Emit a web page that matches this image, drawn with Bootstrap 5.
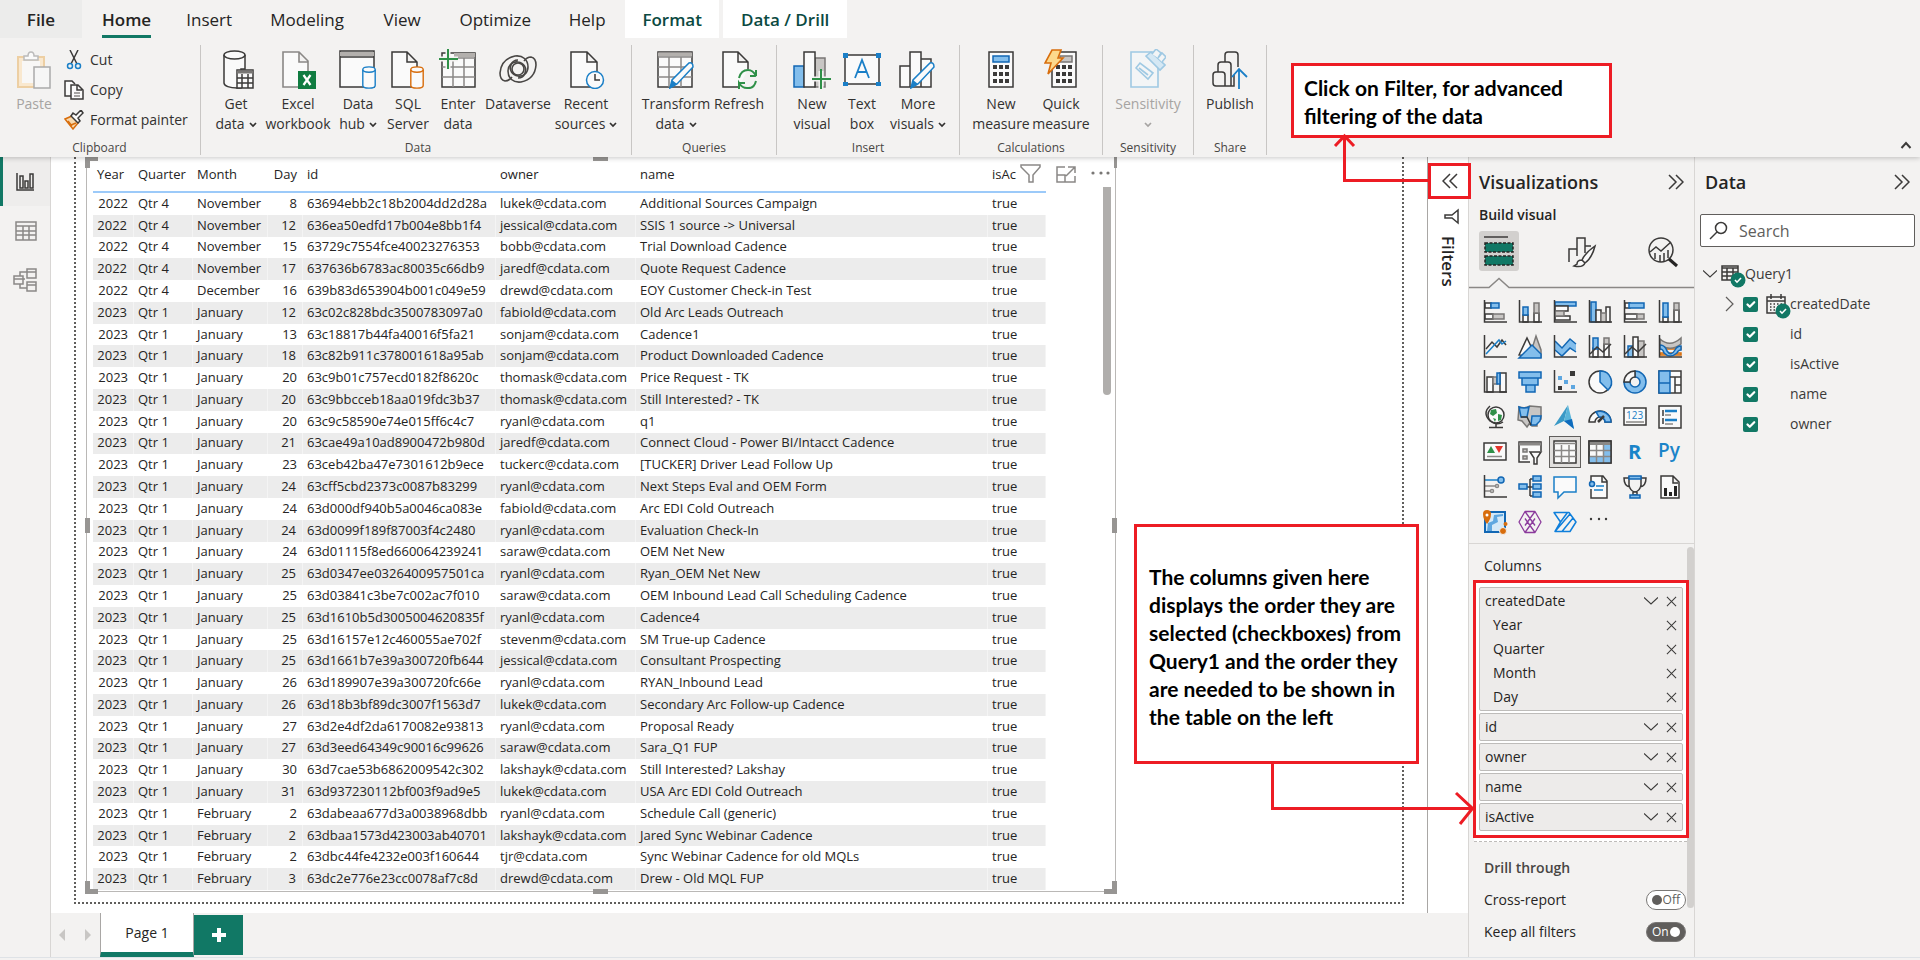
<!DOCTYPE html>
<html lang="en">
<head>
<meta charset="utf-8">
<meta name="viewport" content="width=device-width, initial-scale=1">
<title>Power BI report</title>
<link href="https://cdn.jsdelivr.net/npm/bootstrap@5.3.0/dist/css/bootstrap.min.css" rel="stylesheet">
<style>
:root{--ink:#252423;--chrome:#f3f2f1;--line:#c8c6c4;--teal:#117865;--red:#ed1c24}
body{font-family:"Open Sans","Noto Sans",sans-serif;font-size:14px;line-height:20px;color:var(--ink);background:var(--chrome);overflow:hidden}
button{font:inherit;color:inherit;background:none;border:0;padding:0}
svg{display:block;fill:none;flex-shrink:0}
.semi{font-weight:600}
/* svg paint */
.k{stroke:#3b3a39;stroke-width:1.5}.kf{stroke:#3b3a39;stroke-width:1.5;fill:#fafafa}
.g{stroke:#8a8886;stroke-width:1.5}.gf{stroke:#797775;stroke-width:1.5;fill:#c8c6c4}
.b{stroke:#1a7fc7;stroke-width:1.5}.bf{stroke:#1267b4;stroke-width:1.5;fill:#83beec}.bw{stroke:#1a7fc7;stroke-width:1.5;fill:#fafafa}
.n{stroke:#2f9048;stroke-width:2}
/* ribbon */
.ribbon{box-shadow:0 1px 5px rgba(0,0,0,.22);z-index:3;background:var(--chrome)}
.tabs{height:38px;font-size:17px}
.tabs button{height:38px;padding-top:2px;text-align:center}
.tabs .file{width:82px;background:#ececeb;font-weight:600}
.tabs .on{padding-top:0}
.tabs .on span{font-weight:600;display:block;line-height:30px;border-bottom:3px solid var(--teal);padding-top:5px}
.tabs .ctx{background:#fff;color:#0b4a42;font-weight:600}
.groups{height:119px;padding-top:7px}
.grp{height:110px;border-right:1px solid var(--line);padding:0 9px}
.grp .cap{font-size:12px;line-height:16px;text-align:center;color:#484644}
.grp .tools{height:95px;color:#323130}
.tool{display:flex;flex-direction:column;align-items:center;height:92px;white-space:nowrap}
.tool svg.ic{margin:4px 0 5px}
.w44{width:44px}.w48{width:48px}.w52{width:52px}.w56{width:56px}.w60{width:60px}.w64{width:64px}.w72{width:72px}
.small-tool{height:30px;gap:6px}
.off{color:#a6a4a2}
/* side rail */
.rail{width:51px;border-right:1px solid #d8d6d4}
.rail button{height:49px;border-left:3px solid transparent;padding-left:10px}
.rail .on{border-color:var(--teal);background:#eeedec}
/* canvas */
.canvas{background:#fff;padding:0 23px 9px 23px}
.sheet{border:2px dotted #605e5c;border-top:0;padding:0 0 10px 10px}
.visual{width:1030px;border:1px solid #bab8b6;border-top:0;padding:0 0 1px 6px}
.visual .hd{position:absolute;background:#979593}
.grid-data{table-layout:fixed;width:953px;height:100%;font-size:13px;line-height:17px;border-collapse:separate;border-spacing:0}
.grid-data th{font-weight:400;height:36px;padding:0 6px 0 4px;border-bottom:2px solid #9ccaf9;vertical-align:top;padding-top:9px;overflow:hidden}
.grid-data td{padding:0 6px 1px 4px;white-space:nowrap}
.grid-data tbody tr:nth-child(even) td{background:#ececec;border-right:1px solid #f4f4f4}
.grid-data td:nth-child(4),.grid-data th:nth-child(4),.grid-data td:first-child{text-align:right}
.vis-tools{right:3px;top:7px;gap:14px}
.vbar{right:4px;top:30px;width:8px;height:208px;background:#b0aeac;border-radius:0 0 4px 4px}
.filters{width:41px;background:#fff;border-left:1px solid #a9a7a5;padding-top:6px}
.filters .hot{position:relative;z-index:1;width:43px;height:36px;border:3px solid var(--red);display:flex;align-items:center;justify-content:center;align-self:flex-start}
.filters .vert{writing-mode:vertical-rl;font-size:17px;font-weight:600;line-height:20px;margin-top:11px}
.pages{height:44px;background:var(--chrome)}
.pages .tab{width:94px;background:#fff;border:solid #a9a7a5;border-width:0 1px;border-bottom:5px solid var(--teal)}
.pages .add{width:49px;height:40px;background:var(--teal);margin-top:2px}
/* right panes */
.pane{width:226px;border-left:1px solid #d8d6d4;background:var(--chrome)}
.pane h2{font-size:18px;line-height:26px;font-weight:600;margin:0}
.build-title{padding:10px 0 2px 10px}
.build{height:41px;padding-left:10px;gap:49px;margin-top:4px}
.build .pick{width:40px;height:40px;background:#d2d0ce;border-radius:3px;display:flex;align-items:center;justify-content:center}
.gallery{display:grid;grid-template-columns:repeat(6,35px);grid-auto-rows:35px;padding:0 8px}
.gallery svg{overflow:visible}
.gallery button{display:flex;align-items:center;justify-content:center}
.gallery .sel svg{background:#e1dfdd;outline:1px solid #605e5c;outline-offset:3px;box-shadow:0 0 0 3px #e1dfdd}
.wells{position:relative;z-index:1;border:3px solid var(--red);background:#fff;margin:0 4px;padding:4px 3px;gap:2px;width:216px}
.well{background:#edebea;border:1px solid #bebcba;border-radius:2px;padding:1px 5px}
.well .ln{height:24px;gap:8px}
.drop{height:4px;background:#fff;border-bottom:1px dashed #bebcba;width:213px;margin-left:5px}
.sw{width:40px;height:20px;border-radius:10px;border:1px solid #797775;background:#fff;font-size:12px;line-height:18px;color:#605e5c;display:flex;align-items:center;justify-content:space-between;padding:0 5px}
.sw i{width:10px;height:10px;border-radius:50%;background:#605e5c}
.sw.yes{background:#605e5c;color:#fff}.sw.yes i{background:#fff}
.pbar{right:0;top:3px;width:7px;height:361px;background:#d2d0ce;border-radius:4px}
.search{height:33px;border:1px solid #605e5c;border-radius:2px;background:#fff;margin:19px 5px 8px}
.search input{border:0;outline:0;width:150px;font-size:16px;background:none}
.search input::placeholder{color:#605e5c;opacity:1}
.node{height:30px;color:#3b3a39}
.node .form-check-input{width:15px;height:15px;margin:0;border-radius:2px;border:0;background-color:var(--teal)}
.badge-ok{position:absolute}
/* annotations */
.note{position:absolute;background:#fff;border:3px solid var(--red);font-family:Lato,"Open Sans",sans-serif;font-weight:700;font-size:21px;line-height:28px;color:#000;z-index:5;display:flex;align-items:center;white-space:nowrap}
.note.top{right:308px;top:63px;width:321px;height:75px;padding:2px 0 0 10px}
.note.mid{right:501px;top:524px;width:285px;height:240px;padding:6px 0 0 12px}
.arrow{position:absolute;z-index:6;stroke:var(--red);stroke-width:3;pointer-events:none}
</style>
</head>
<body class="vh-100 d-flex flex-column position-relative">
<svg width="0" height="0" class="position-absolute">
  <symbol id="x" viewBox="0 0 12 12"><path d="M1 1l10 10M11 1L1 11" stroke="#3b3a39" stroke-width="1.1"/></symbol>
  <symbol id="dn" viewBox="0 0 14 8"><path d="M0 .5l7 6.500 7-6.500" stroke="#3b3a39" stroke-width="1.100"/></symbol>
  <symbol id="v" viewBox="0 0 8 6"><path d="M1 1l3 3 3-3" stroke="currentColor" stroke-width="1.700"/></symbol>
  <symbol id="ok" viewBox="0 0 16 16"><circle cx="8" cy="8" r="7.500" fill="#117865"/><path d="M5 8l2 2.200L11 6" stroke="#fff" stroke-width="1.600"/></symbol>
  <symbol id="cyl" viewBox="0 0 16 26"><path d="M1 4v18c0 2 3 3 7 3s7-1 7-3V4" fill="#fafafa" stroke="currentColor" stroke-width="1.600"/><ellipse cx="8" cy="4" rx="7" ry="3" fill="#fafafa" stroke="currentColor" stroke-width="1.600"/></symbol>
</svg>

<header class="ribbon position-relative">
  <nav class="tabs d-flex" aria-label="Ribbon tabs">
    <button class="file">File</button>
    <button class="on ms-3 px-1"><span>Home</span></button>
    <button style="width:76px" class="ms-3">Insert</button>
    <button style="width:112px" class="ms-1">Modeling</button>
    <button style="width:78px">View</button>
    <button style="width:108px">Optimize</button>
    <button style="width:76px">Help</button>
    <button class="ctx" style="width:94px">Format</button>
    <button class="ctx ms-1" style="width:124px">Data / Drill</button>
  </nav>
  <div class="groups d-flex">
    <section class="grp" style="width:201px;padding-left:12px">
      <div class="tools d-flex">
        <button class="tool off w44 me-2"><svg class="ic" width="36" height="40" viewBox="0 0 36 40"><path d="M2 8h26v30H2z" fill="#f9e8cf" stroke="#edcfa3" stroke-width="2"/><path d="M6 12h18v22H6z" fill="#f8f7f6"/><path d="M8 11V7h4q0-4 3-4t3 4h4v4z" fill="#fafafa" stroke="#bbb" stroke-width="1.500"/><path d="M18 18h16v21H18z" fill="#f6f6f6" stroke="#aaa" stroke-width="1.500"/></svg>Paste</button>
        <div>
          <button class="small-tool d-flex align-items-center"><svg width="20" height="20" viewBox="0 0 20 20"><path d="M6 0l7 14M14 0L7 14" class="k"/><circle cx="6" cy="16" r="2.500" class="b"/><circle cx="14" cy="16" r="2.500" class="b"/></svg>Cut</button>
          <button class="small-tool d-flex align-items-center"><svg width="20" height="20" viewBox="0 0 20 20"><path d="M7 16H1V1h7l3 3" class="kf"/><path d="M7 5h7l5 5v9H7zM13 5v5h5" class="kf"/><path d="M10 13h6M10 16h6" class="g"/></svg>Copy</button>
          <button class="small-tool d-flex align-items-center"><svg width="20" height="20" viewBox="0 0 20 20"><path d="M1 9l7-3 6 7-5 6z" fill="#f7d9ae" stroke="#d86d0c" stroke-width="1.500"/><path d="M4 11l4 5M7 15l5-2" stroke="#d86d0c" stroke-width="1.500"/><path d="M7 6l2-3 3 2 5-5 2 3-5 5 2 3-2 2z" class="kf"/></svg>Format painter</button>
        </div>
      </div>
      <div class="cap pe-1">Clipboard</div>
    </section>
    <section class="grp" style="padding-left:5px">
      <div class="tools d-flex">
        <button class="tool w60"><svg class="ic" width="36" height="40" viewBox="0 0 36 40"><path d="M6 6v28c0 3 6 5 13 5h4V20h4V6" class="kf"/><ellipse cx="16.500" cy="6" rx="10.500" ry="4" class="kf"/><path d="M19 21h16v18H19z" class="kf"/><path d="M19 23h16" stroke="#797775" stroke-width="3"/><path d="M19 29h16M19 34h16M24 25v14M30 25v14" class="k"/></svg><span>Get</span><span>data<svg class="d-inline ms-1" width="8" height="6"><use href="#v"/></svg></span></button>
        <button class="tool w64"><svg class="ic" width="36" height="40" viewBox="0 0 36 40"><path d="M3 3h16l9 9v26H3zM19 3v10h9" fill="#fafafa" stroke="#8a8886" stroke-width="1.600"/><path d="M18 22h18v18H18z" fill="#107c41"/><path d="M23.500 26l7 10M30.500 26l-7 10" stroke="#fff" stroke-width="2.200"/></svg><span>Excel</span><span>workbook</span></button>
        <button class="tool w56"><svg class="ic" width="38" height="40" viewBox="0 0 38 40"><path d="M1 2h34v36H1z" class="kf"/><path d="M1 5h34" stroke="#b3b0ad" stroke-width="4"/><path d="M1 8h34" class="k"/><svg x="22" y="17" width="16" height="23" color="#1a7fc7"><use href="#cyl"/></svg></svg><span>Data</span><span>hub<svg class="d-inline ms-1" width="8" height="6"><use href="#v"/></svg></span></button>
        <button class="tool w44"><svg class="ic" width="36" height="40" viewBox="0 0 36 40"><path d="M2 3h15l10 10v25H2zM17 3v10h10" class="kf"/><svg x="19" y="17" width="16" height="23" color="#d86d0c"><use href="#cyl"/></svg></svg><span>SQL</span><span>Server</span></button>
        <button class="tool w56"><svg class="ic" width="40" height="40" viewBox="0 0 40 40"><path d="M4 4h33v34H4z" class="kf"/><path d="M16 6h21" stroke="#b3b0ad" stroke-width="4"/><path d="M4 9h33M4 18h33M4 28h33M15 9v29M26 9v29" class="g"/><path d="M10 0v20M1 10h19" stroke="#f3f2f1" stroke-width="5"/><path d="M10 0v20M1 10h19" class="n"/></svg><span>Enter</span><span>data</span></button>
        <button class="tool w64 px-0"><svg class="ic" width="38" height="40" viewBox="0 0 38 40"><g stroke="#484644" stroke-width="1.600"><circle cx="19" cy="20" r="6"/><path id="dv" d="M13 28q-3 4-7 4Q1 31 1 24 2 10 16 7c8-1 13 4 13 11 0 6-5 10-10 9-6-1-9-6-7-11 1-3 4-5 7-5"/><use href="#dv" transform="rotate(180 19 20)"/></g></svg>Dataverse</button>
        <button class="tool w72"><svg class="ic" width="38" height="40" viewBox="0 0 38 40"><path d="M4 3h16l10 10v25H4zM20 3v10h10" class="kf"/><circle cx="28" cy="31" r="8.500" class="bw"/><path d="M28 25v6h5" class="k"/></svg><span>Recent</span><span>sources<svg class="d-inline ms-1" width="8" height="6"><use href="#v"/></svg></span></button>
      </div>
      <div class="cap ps-2">Data</div>
    </section>
    <section class="grp">
      <div class="tools d-flex">
        <button class="tool" style="width:70px"><svg class="ic" width="38" height="40" viewBox="0 0 38 40"><path d="M1 3h34v35H1z" class="kf"/><path d="M1 5.500h34" stroke="#b3b0ad" stroke-width="4"/><path d="M1 8h34M1 18h34M1 28h34M12 8v30M24 8v30" class="g"/><path d="M13 39l2-8 17-17q4-1 4 4L20 35z" class="bw"/><path d="M13 39l2-8 5 4z" fill="#1a7fc7"/></svg><span>Transform</span><span>data<svg class="d-inline ms-1" width="8" height="6"><use href="#v"/></svg></span></button>
        <button class="tool w56"><svg class="ic" width="36" height="40" viewBox="0 0 36 40"><path d="M18 38H2V3h15l10 10v7M17 3v10h10" class="kf"/><path d="M18 29q2-8 9-8 5 0 8 6v-6M35 27h-6M35 32q-2 8-9 7-5 0-8-5v6M18 34h6" class="n"/></svg>Refresh</button>
      </div>
      <div class="cap">Queries</div>
    </section>
    <section class="grp">
      <div class="tools d-flex">
        <button class="tool w52"><svg class="ic" width="38" height="40" viewBox="0 0 38 40"><path d="M1 17h10v21H1z" class="bf"/><path d="M22 9h10v29H22z" class="gf"/><path d="M11 3h11v35H11z" class="kf"/><path d="M28 22v19M19 30h18" stroke="#f3f2f1" stroke-width="5"/><path d="M28 20v20M19 30h19" class="n"/></svg><span>New</span><span>visual</span></button>
        <button class="tool w48"><svg class="ic" width="40" height="40" viewBox="0 0 40 40"><path d="M3 6h34v29H3z" class="kf"/><path d="M1 4h5v5H1zM34 4h5v5h-5zM1 33h5v4H1zM34 33h5v4h-5z" fill="#1a7fc7"/><path d="M13 29l7-18 7 18M15.500 23h9" stroke="#1a7fc7" stroke-width="1.800"/></svg><span>Text</span><span>box</span></button>
        <button class="tool w64"><svg class="ic" width="38" height="40" viewBox="0 0 38 40"><path d="M1 17h10v21H1zM22 10h10v28H22zM11 3h11v35H11z" class="kf"/><path d="M12 39l2-8 17-17q4-1 4 4L19 35z" class="bw"/><path d="M12 39l2-8 5 4z" fill="#1a7fc7"/></svg><span>More</span><span>visuals<svg class="d-inline ms-1" width="8" height="6"><use href="#v"/></svg></span></button>
      </div>
      <div class="cap">Insert</div>
    </section>
    <section class="grp px-2" style="width:143px">
      <div class="tools d-flex justify-content-center">
        <button class="tool w60"><svg class="ic" width="26" height="40" viewBox="0 0 26 40"><path d="M1 3h24v35H1z" class="kf"/><path d="M5 7h16v6H5z" class="bf"/><path d="M5 18h16M5 25h16M5 32h16" stroke="#3b3a39" stroke-width="4" stroke-dasharray="4 2"/></svg><span>New</span><span>measure</span></button>
        <button class="tool w60"><svg class="ic" width="34" height="40" viewBox="0 0 34 40"><path d="M8 3h24v35H8z" class="kf"/><path d="M16 7h12v6H16z" class="gf"/><path d="M12 18h16M12 25h16M12 32h16" stroke="#3b3a39" stroke-width="4" stroke-dasharray="4 2"/><path d="M8 1h9l-3 8h5L4 25l3-11H1z" fill="#fcd98c" stroke="#d86d0c" stroke-width="1.600"/></svg><span>Quick</span><span>measure</span></button>
      </div>
      <div class="cap">Calculations</div>
    </section>
    <section class="grp">
      <div class="tools d-flex">
        <button class="tool w72 off"><svg class="ic" width="36" height="40" viewBox="0 0 36 40"><g stroke="#9fc9e3" stroke-width="1.600"><path d="M1 3h27v35H1z" fill="#f3f5f6"/><path d="M6 19l4-5 13 10-5 6z" fill="#f3f5f6"/><path d="M9 19l9 7"/><path d="M16 7l5-4 14 13-5 5z" fill="#d5e8f4"/><path d="M22 5l4-5 5 4-3 5M28 9l4-5 4 4-4 5" fill="#f3f5f6"/></g></svg><span>Sensitivity</span><svg class="mt-2" width="8" height="6"><use href="#v"/></svg></button>
      </div>
      <div class="cap">Sensitivity</div>
    </section>
    <section class="grp px-2">
      <div class="tools d-flex">
        <button class="tool w56"><svg class="ic" width="36" height="40" viewBox="0 0 36 40"><path d="M4 37q-3 0-3-3V26q0-3 3-3h6q3 0 3 3v11zM6 23v-7q0-3 3-3h7q3 0 3 3v21h-6M13 13V6q0-3 3-3h7q3 0 3 3v12M19 37h3V26" class="k"/><path d="M27 40V21M20 28l7-8 8 8" stroke="#1a7fc7" stroke-width="1.800"/></svg>Publish</button>
      </div>
      <div class="cap">Share</div>
    </section>
    <button class="ms-auto align-self-end me-1 pb-2 pe-1" aria-label="Collapse ribbon"><svg width="12" height="8" viewBox="0 0 12 8"><path d="M1.500 7L6 2l4.500 5" stroke="#3b3a39" stroke-width="2"/></svg></button>
  </div>
</header>

<main class="d-flex flex-grow-1 border-bottom" style="min-height:0;margin-bottom:2px">
  <nav class="rail d-flex flex-column flex-shrink-0" aria-label="Views">
    <button class="on" aria-label="Report view"><svg width="22" height="20" viewBox="0 0 22 20"><path d="M4 1v17h17" class="k"/><path d="M7 4h3v12H7zM12 9h3v7h-3zM17 2h3v14h-3z" class="k"/></svg></button>
    <button aria-label="Table view"><svg width="24" height="20" viewBox="0 0 24 20"><path d="M3 1h20v18H3zM3 5h20M3 10h20M3 14h20M10 5v14M16 5v14" class="g"/></svg></button>
    <button aria-label="Model view"><svg width="24" height="24" viewBox="0 0 24 24"><path d="M1 8h9v8H1zM1 11h9M14 1h9v9h-9zM14 4h9M14 14h9v9h-9zM14 17h9M10 11h2M7 8V4h7M7 16v4h7" class="g"/></svg></button>
  </nav>

  <div class="flex-grow-1 d-flex flex-column">
    <div class="flex-grow-1 d-flex">
      <div class="canvas flex-grow-1 d-flex flex-column">
        <div class="sheet flex-grow-1 d-flex">
          <div class="visual position-relative">
            <table class="grid-data">
              <colgroup><col style="width:41px"><col style="width:59px"><col style="width:75px"><col style="width:35px"><col style="width:193px"><col style="width:140px"><col style="width:352px"><col style="width:58px"></colgroup>
              <thead><tr><th>Year</th><th>Quarter</th><th>Month</th><th>Day</th><th>id</th><th>owner</th><th>name</th><th>isAc</th></tr></thead>
              <tbody id="rows"></tbody>
            </table>
            <div class="vis-tools position-absolute d-flex bg-white">
              <button aria-label="Filters"><svg width="22" height="20" viewBox="0 0 22 20"><path d="M1 1h19v2l-7 8v7H9v-7L1 3z" class="g"/></svg></button>
              <button aria-label="Focus mode"><svg width="20" height="20" viewBox="0 0 20 20"><path d="M9 3H1v15h18v-6M1 11h8v7M12 3h7v6M10 12l9-9" class="g"/></svg></button>
              <button aria-label="More options"><svg width="22" height="20" viewBox="0 0 22 20"><g fill="#797775"><circle cx="3" cy="9" r="1.600"/><circle cx="11" cy="9" r="1.600"/><circle cx="18" cy="9" r="1.600"/></g></svg></button>
            </div>
            <div class="vbar position-absolute"></div>
            <i class="hd" style="left:-2px;top:0;width:5px;height:11px"></i><i class="hd" style="left:-2px;top:0;width:13px;height:4px"></i>
            <i class="hd" style="left:506px;top:0;width:15px;height:4px"></i><i class="hd" style="right:-2px;top:0;width:3px;height:11px"></i>
            <i class="hd" style="left:-2px;top:361px;width:5px;height:15px"></i><i class="hd" style="right:-2px;top:361px;width:5px;height:15px"></i>
            <i class="hd" style="left:-2px;bottom:-3px;width:5px;height:13px"></i><i class="hd" style="left:-2px;bottom:-3px;width:13px;height:5px"></i>
            <i class="hd" style="left:506px;bottom:-3px;width:15px;height:5px"></i>
            <i class="hd" style="right:-2px;bottom:-3px;width:5px;height:13px"></i><i class="hd" style="right:-2px;bottom:-3px;width:13px;height:5px"></i>
          </div>
        </div>
      </div>
      <aside class="filters d-flex flex-column align-items-center">
        <button class="hot" aria-label="Expand filters"><svg width="16" height="16" viewBox="0 0 16 16"><path d="M8 1L1 8l7 7M15 1L8 8l7 7" class="k"/></svg></button>
        <svg class="mt-2 ms-2" width="16" height="18" viewBox="0 0 16 18"><path d="M14 3v13l-6-5H1V8h7z" class="k"/></svg>
        <span class="vert">Filters</span>
      </aside>
    </div>
    <div class="pages d-flex">
      <button class="px-2" aria-label="Previous page"><svg width="6" height="12"><path d="M6 0v12L0 6z" fill="#c8c6c4"/></svg></button>
      <button class="ms-1 pe-2 ps-2" aria-label="Next page"><svg width="7" height="12"><path d="M0 0v12l6-6z" fill="#c8c6c4"/></svg></button>
      <button class="tab">Page 1</button>
      <button class="add d-flex align-items-center justify-content-center" aria-label="New page"><svg width="14" height="14"><path d="M7 0v14M0 7h14" stroke="#fff" stroke-width="4"/></svg></button>
    </div>
  </div>

  <aside class="pane flex-shrink-0 d-flex flex-column">
    <div class="d-flex justify-content-between align-items-center mt-2 pt-1" style="padding:0 10px"><h2>Visualizations</h2><button aria-label="Collapse"><svg width="16" height="16" viewBox="0 0 16 16"><path d="M1 1l7 7-7 7M8 1l7 7-7 7" class="k"/></svg></button></div>
    <div class="semi build-title">Build visual</div>
    <div class="build d-flex">
      <button class="pick" aria-label="Build visual"><svg width="32" height="32" viewBox="0 0 32 32"><path d="M1 2h24" class="k"/><path d="M2 8h28v9H2zM2 21h28v9H2z" fill="#117865" stroke="#252423" stroke-width="1.500" stroke-dasharray="3 1.500"/></svg></button>
      <button aria-label="Format visual"><svg width="30" height="32" viewBox="0 0 30 32"><path d="M1 26V13h8M9 20V2h8v15M17 10h6" class="k"/><path d="M27 10Q17 17 14 24l3 3Q24 22 27 10zM14 24q-5 0-5 4l-3 2q9 2 11-3" class="kf"/></svg></button>
      <button aria-label="Analytics"><svg width="32" height="32" viewBox="0 0 32 32"><circle cx="14" cy="14" r="12" class="k"/><path d="M3 16l6-5 5 4 10-9M8 17v6M13 19v7M17 17v8M21 14v8" class="k"/><path d="M22 23l8 7" stroke="#252423" stroke-width="3"/></svg></button>
    </div>
    <svg width="100%" height="18" class="mt-1"><path d="M0 11.500h20l10-9 10 9h190" stroke="#8a8886" stroke-width="1.500"/></svg>
    <div class="gallery" id="gallery"></div>
    <div class="position-relative border-top mt-1 flex-grow-1" style="border-color:#d8d6d4!important">
      <div class="pt-2 pb-1 mt-1" style="padding-left:15px">Columns</div>
      <div class="wells d-flex flex-column" id="wells"></div>
      <div class="drop"></div>
      <div class="semi mt-3" style="color:#484644;padding-left:15px">Drill through</div>
      <div class="d-flex justify-content-between align-items-center pe-2 mt-2 pt-1" style="padding-left:15px"><label for="cr">Cross-report</label><label class="sw" for="cr"><input id="cr" type="checkbox" role="switch" class="visually-hidden"><i></i>Off</label></div>
      <div class="d-flex justify-content-between align-items-center pe-2 mt-2 pt-1" style="padding-left:15px"><label for="kf">Keep all filters</label><label class="sw yes" for="kf"><input id="kf" type="checkbox" role="switch" checked class="visually-hidden">On<i></i></label></div>
      <div class="pbar position-absolute"></div>
    </div>
  </aside>

  <aside class="pane flex-shrink-0">
    <div class="d-flex justify-content-between align-items-center mt-2 pt-1" style="padding:0 10px"><h2>Data</h2><button aria-label="Collapse"><svg width="16" height="16" viewBox="0 0 16 16"><path d="M1 1l7 7-7 7M8 1l7 7-7 7" class="k"/></svg></button></div>
    <div class="search d-flex align-items-center ps-2"><svg class="me-2" width="20" height="20" viewBox="0 0 20 20"><circle cx="12" cy="7" r="5.500" class="k"/><path d="M8 11l-7 7" class="k"/></svg><input type="search" placeholder="Search" aria-label="Search"></div>
    <div class="pt-1">
      <div class="node d-flex align-items-center ps-2"><svg class="me-1" width="14" height="8"><use href="#dn"/></svg><span class="position-relative me-1"><svg width="20" height="18" viewBox="0 0 20 18"><path d="M1 1h16v14H1zM1 3h16M1 7h16M1 11h16M6 3v12M12 3v12" class="k"/></svg><svg class="badge-ok" style="left:9px;top:7px" width="16" height="16"><use href="#ok"/></svg></span>Query1</div>
      <div id="fields"></div>
    </div>
  </aside>
</main>

<div class="note top">Click on Filter, for advanced<br>filtering of the data</div>
<div class="note mid">The columns given here<br>displays the order they are<br>selected (checkboxes) from<br>Query1 and the order they<br>are needed to be shown in<br>the table on the left</div>
<svg class="arrow" style="right:492px;top:132px" width="100" height="52"><path d="M100 48.500H16.500V5M7 14l9.500-10 9.500 10"/></svg>
<svg class="arrow" style="right:445px;top:762px" width="206" height="66"><path d="M3.500 2v44.500H204M187 31l16.500 15.500L191 62"/></svg>

<script src="https://cdn.jsdelivr.net/npm/bootstrap@5.3.0/dist/js/bootstrap.bundle.min.js"></script>
<script>
const data = `2022|4|November|8|63694ebb2c18b2004dd2d28a|lukek|Additional Sources Campaign
2022|4|November|12|636ea50edfd17b004e8bb1f4|jessical|SSIS 1 source -> Universal
2022|4|November|15|63729c7554fce40023276353|bobb|Trial Download Cadence
2022|4|November|17|637636b6783ac80035c66db9|jaredf|Quote Request Cadence
2022|4|December|16|639b83d653904b001c049e59|drewd|EOY Customer Check-in Test
2023|1|January|12|63c02c828bdc3500783097a0|fabiold|Old Arc Leads Outreach
2023|1|January|13|63c18817b44fa40016f5fa21|sonjam|Cadence1
2023|1|January|18|63c82b911c378001618a95ab|sonjam|Product Downloaded Cadence
2023|1|January|20|63c9b01c757ecd0182f8620c|thomask|Price Request - TK
2023|1|January|20|63c9bbcceb18aa019fdc3b37|thomask|Still Interested? - TK
2023|1|January|20|63c9c58590e74e015ff6c4c7|ryanl|q1
2023|1|January|21|63cae49a10ad8900472b980d|jaredf|Connect Cloud - Power BI/Intacct Cadence
2023|1|January|23|63ceb42ba47e7301612b9ece|tuckerc|[TUCKER] Driver Lead Follow Up
2023|1|January|24|63cff5cbd2373c0087b83299|ryanl|Next Steps Eval and OEM Form
2023|1|January|24|63d000df940b5a0046ca083e|fabiold|Arc EDI Cold Outreach
2023|1|January|24|63d0099f189f87003f4c2480|ryanl|Evaluation Check-In
2023|1|January|24|63d01115f8ed660064239241|saraw|OEM Net New
2023|1|January|25|63d0347ee0326400957501ca|ryanl|Ryan_OEM Net New
2023|1|January|25|63d03841c3be7c002ac7f010|saraw|OEM Inbound Lead Call Scheduling Cadence
2023|1|January|25|63d1610b5d3005004620835f|ryanl|Cadence4
2023|1|January|25|63d16157e12c460055ae702f|stevenm|SM True-up Cadence
2023|1|January|25|63d1661b7e39a300720fb644|jessical|Consultant Prospecting
2023|1|January|26|63d189907e39a300720fc66e|ryanl|RYAN_Inbound Lead
2023|1|January|26|63d18b3bf89dc3007f1563d7|lukek|Secondary Arc Follow-up Cadence
2023|1|January|27|63d2e4df2da6170082e93813|ryanl|Proposal Ready
2023|1|January|27|63d3eed64349c90016c99626|saraw|Sara_Q1 FUP
2023|1|January|30|63d7cae53b6862009542c302|lakshayk|Still Interested? Lakshay
2023|1|January|31|63d937230112bf003f9ad9e5|lukek|USA Arc EDI Cold Outreach
2023|1|February|2|63dabeaa677d3a0038968dbb|ryanl|Schedule Call (generic)
2023|1|February|2|63dbaa1573d423003ab40701|lakshayk|Jared Sync Webinar Cadence
2023|1|February|2|63dbc44fe4232e003f160644|tjr|Sync Webinar Cadence for old MQLs
2023|1|February|3|63dc2e776e23cc0078af7c8d|drewd|Drew - Old MQL FUP`;
for (const line of data.split('\n')) {
  const [y, q, m, d, id, o, n] = line.split('|');
  const tr = document.getElementById('rows').insertRow();
  for (const t of [y, 'Qtr ' + q, m, d, id, o + '@cdata.com', n, 'true']) tr.insertCell().textContent = t;
}
const ax = '<path d="M1.500 0v22H24" class="k"/>';
const icons = [
  ['Stacked bar', '<path d="M2 3h6v5H2zM2 14h8v5H2z" class="kf"/><path d="M8 3h8v5H8z" class="bf"/><path d="M10 14h11v5H10z" class="gf"/>' + ax],
  ['Stacked column', '<path d="M5 15h5v7H5zM16 13h5v9h-5z" class="kf"/><path d="M5 7h5v8H5z" class="bf"/><path d="M16 3h5v10h-5z" class="gf"/>' + ax],
  ['Clustered bar', '<path d="M2 2h21v4H2z" class="bf"/><path d="M2 6h13v5H2zM2 16h15v4H2z" class="kf"/><path d="M2 11h9v5H2z" class="gf"/>' + ax],
  ['Clustered column', '<path d="M3 2h5v20H3z" class="bf"/><path d="M8 10h5v12H8zM18 7h4v15h-4z" class="kf"/><path d="M13 13h5v9h-5z" class="gf"/>' + ax],
  ['100% stacked bar', '<path d="M2 3h5v5H2zM2 14h12v5H2z" class="kf"/><path d="M6 3h15v5H6z" class="bf"/><path d="M14 14h7v5h-7z" class="gf"/>' + ax],
  ['100% stacked column', '<path d="M5 17h5v5H5zM16 10h5v12h-5z" class="kf"/><path d="M5 3h5v14H5z" class="bf"/><path d="M16 3h5v7h-5z" class="gf"/>' + ax],
  ['Line', '<path d="M3 14l6-7 5 5 5-7 4 5" class="k"/><path d="M3 19L16 5l3 4 4-3" class="b"/>' + ax],
  ['Area', '<path d="M1 20L9 3l9 19z" class="kf"/><path d="M12 20l6-19 5 14v7z" class="gf"/><path d="M1 23l13-13 9 9v4z" class="bf"/>'],
  ['Stacked area', '<path d="M2 6l7 7 8-9 6 5v8l-6-3-8 8-7-7z" fill="#83beec"/><path d="M2 6l7 7 8-9 6 5M2 15l7 6 8-8 6 4" class="bf" style="fill:none"/>' + ax],
  ['Line and stacked column', '<path d="M5 13h5v9H5zM16 9h5v13h-5z" class="kf"/><path d="M5 3h5v11H5z" class="bf"/><path d="M16 3h5v6h-5z" class="gf"/><path d="M2 19l7-7 6 5 8-8" class="k"/>' + ax],
  ['Line and clustered column', '<path d="M5 11h5v11H5z" class="bf"/><path d="M15 6h6v16h-6z" class="gf"/><path d="M10 2h5v20h-5z" class="kf"/><path d="M2 19l7-7 6 5 8-8" class="k"/>' + ax],
  ['Ribbon', '<path d="M2 12h21v2H2zM2 18h21v2H2z" fill="#f7c98b" stroke="#d86d0c" stroke-width="1.500"/><path d="M2 4q10 9 21-1v6q-10 8-21 1z" class="gf"/><path d="M2 10q5 0 7 6 4 6 8-1 2-4 6-4v4q-3 0-4 3-7 6-13 0-1-4-4-4z" class="bf"/>' + ax],
  ['Waterfall', '<path d="M4 7h6v15H4zM17 3h6v19h-6z" class="kf"/><path d="M10 7h4v7h-4z" class="gf"/><path d="M14 3h3v11h-3z" class="bf"/>' + ax],
  ['Funnel', '<path d="M1 2h22v6H1zM4 8h16v7H4zM8 15h9v7H8z" class="bf"/>'],
  ['Scatter', '<path d="M17 1h5v5h-5zM5 16h4v4H5z" fill="#3b3a39"/><path d="M5 6h4v4H5zM11 10h4v4h-4zM18 15h4v4h-4z" fill="#5ea7e0"/>' + ax],
  ['Pie', '<circle cx="12" cy="12" r="11" class="kf"/><path d="M12 1a11 11 0 018 19l-8-8z" class="bf"/>'],
  ['Donut', '<path d="M12 1a11 11 0 11-11 11h6a5 5 0 105-5z" class="bf"/><path d="M12 1A11 11 0 001 12h6a5 5 0 015-5z" class="kf"/>'],
  ['Treemap', '<path d="M1 1h22v22H1z" class="kf"/><path d="M1 1h11v22H1zM1 13h11" class="bf"/><path d="M12 7h11M17 7v16M17 15h6" class="k"/>'],
  ['Map', '<circle cx="13" cy="10" r="8" class="kf"/><path d="M8 5l5-1 1 4-4 3-3-2zM15 9l4 1-1 5-3 1zM10 13l3 1-1 3z" fill="#2f9048"/><path d="M7 1q-8 7 0 15 7 5 13 1M13 19v4M6 22.500h14" class="k"/>'],
  ['Filled map', '<path d="M1 2q6 2 11-1l11 1v12l-4 3v4h-5l-3-2-2 3-5-6-4-1z" class="gf"/><path d="M1 2q5 2 10 0l-2 10H3zM14 11h9l-1 5-4 4-5 0z" class="bf"/><path d="M3 12h6l4 8" class="k"/>'],
  ['Azure map', '<path d="M15 0L1 21l10-5z" fill="#3999c6"/><path d="M15 0l6 24-10-8z" fill="#59b4d9"/><path d="M11 16l10 8-2-10z" fill="#0f6cbd"/>'],
  ['Gauge', '<path d="M1 17A11 11 0 0123 17h-6a5 5 0 00-10 0z" class="kf"/><path d="M8 7a11 11 0 0115 10h-6a5 5 0 00-6-5z" class="bf"/><path d="M10 17l6-6" stroke="#3b3a39" stroke-width="2.500"/>'],
  ['Card', '<path d="M1 3h22v17H1z" class="kf"/><text x="3" y="14" font-size="10" fill="#1a7fc7">123</text><path d="M3 17h18" class="g"/>'],
  ['Multi-row card', '<path d="M1 1h22v22H1z" class="kf"/><path d="M5 5v6M5 13v6" class="k"/><path d="M7 6h12M7 15h12" class="b" style="stroke-width:2.500"/><path d="M7 10h6M7 19h8" class="g"/>'],
  ['KPI', '<path d="M1 3h22v17H1z" class="kf"/><path d="M4 13l4-7 4 7z" fill="#2f9048"/><path d="M12 6h8l-4 7z" fill="#e3352b"/><path d="M4 16.500h15" class="g"/>'],
  ['Slicer', '<path d="M12 22H1V2h22v9" class="kf"/><path d="M1 4h22" class="g" style="stroke-width:3"/><path d="M5 9h4v3H5zM5 16h4v3H5z" class="gf"/><path d="M12 12h11l-4 6v6h-3v-6z" class="kf"/>'],
  ['Table', '<path d="M1 1h22v22H1z" class="kf"/><path d="M1 3.500h22M1 10.500h22M1 16.500h22M8.500 5v18M16 5v18" class="g"/>', 1],
  ['Matrix', '<path d="M1 1h22v22H1z" class="kf"/><path d="M15 5h8v18H1v-6h14z" fill="#83beec"/><path d="M1 3.500h22" class="g" style="stroke-width:3"/><path d="M1 10.500h22M1 16.500h22M8.500 5v18M15.500 5v18" class="g"/><path d="M1 1h22v22H1z" class="k"/>'],
  ['R script', '<text x="5" y="19" font-size="20" font-weight="700" fill="#1a84c9">R</text>'],
  ['Python', '<text x="0" y="17" font-size="19" font-weight="600" fill="#1a84c9">Py</text>'],
  ['Key influencers', '<path d="M2 5h14" class="b"/><circle cx="18" cy="5" r="3" class="bf"/><path d="M2 11h10M2 16h5" class="g"/><circle cx="14" cy="11" r="1.500" class="g"/><circle cx="9" cy="16" r="1.500" class="g"/>' + ax],
  ['Decomposition tree', '<path d="M9 12h6M12 4v17M12 4h3M12 21h3" class="k"/><path d="M1 9h8v5H1zM15 1h8v5h-8zM15 9h8v5h-8zM15 17h8v5h-8z" class="bf"/>'],
  ['Q&A', '<path d="M1 2h22v15H11l-6 6v-6H1z" class="bw"/>'],
  ['Narrative', '<path d="M3 6V1h12l4 5v17H3V14M14 1v6h5" class="kf"/><path d="M8 11h8M6 15h9" class="b"/><circle cx="4" cy="9" r="2.500" class="bf"/>'],
  ['Goals', '<path d="M6 2h12v8q-1 6-6 7-5-1-6-7zM6 3H1q0 8 6 9M18 3h5q0 8-6 9M10 17v3h4v-3" class="k"/><path d="M6 1h12v3H6zM7 20h10v3H7z" class="bf"/>'],
  ['Paginated report', '<path d="M3 1h12l6 6v16H3zM15 1v7h5" class="kf"/><path d="M6 13h3v8H6zM11 17h3v4h-3zM16 11h3v10h-3z" fill="#252423"/>'],
  ['ArcGIS', '<path d="M2 2h20v20H2z" fill="#d4e9f8" stroke="#1267b4" stroke-width="2"/><path d="M20 6l-6 1 1 5-6 3v6H4l1-8 5-2 1-6 9-1z" fill="#5ea7e0"/><path d="M0 4a4 4 0 018 0q0 5-4 10-4-5-4-10z" fill="#d86d0c"/><circle cx="4" cy="5" r="1.500" fill="#fff"/><circle cx="20" cy="21" r="3.500" fill="#d86d0c" stroke="#f3f2f1"/><circle cx="22.500" cy="14" r="2" fill="#d86d0c"/>'],
  ['Power Apps', '<path d="M7 1.500h10L23 12l-6 10.500H7L1 12zM7 1.500l10 14M17 1.500L7 15.500M7 8.500l10 14M17 8.500L7 22.500" stroke="#8b3a9c" stroke-width="1.300" stroke-linejoin="round"/>'],
  ['Power Automate', '<path d="M1 2.500h15L23 12l-6 9.500H2L7.500 12zM7.500 12l7-9.500M2 21.500L17 4M9 21.500L20 8" stroke="#0f7fdb" stroke-width="1.500" stroke-linejoin="round"/>'],
  ['More visuals', '<g fill="#3b3a39"><circle cx="3" cy="9" r="1.200"/><circle cx="11" cy="9" r="1.200"/><circle cx="18" cy="9" r="1.200"/></g>']
];
document.getElementById('gallery').innerHTML = icons.map(([n, s, on]) =>
  `<button aria-label="${n}"${on ? ' class="sel"' : ''}><svg width="24" height="24" viewBox="0 0 24 24">${s}</svg></button>`).join('');
const dn = '<button aria-label="Options"><svg width="14" height="8"><use href="#dn"/></svg></button>';
const x = '<button aria-label="Remove"><svg width="11" height="11"><use href="#x"/></svg></button>';
document.getElementById('wells').innerHTML = [['createdDate', 'Year', 'Quarter', 'Month', 'Day'], ['id'], ['owner'], ['name'], ['isActive']].map(w =>
  '<div class="well">' +
  w.map((t, j) => `<div class="ln d-flex align-items-center"><span class="me-auto${j ? ' ps-2' : ''}">${t}</span>${j ? '' : dn}${x}</div>`).join('') + '</div>').join('');
document.getElementById('fields').innerHTML = ['createdDate', 'id', 'isActive', 'name', 'owner'].map((f, i) =>
  `<div class="node d-flex align-items-center" style="padding-left:${i ? 48 : 30}px">` +
  (i ? '' : '<svg class="me-2" width="10" height="16" viewBox="0 0 10 16"><path d="M1 1l7 7-7 7" stroke="#605e5c" stroke-width="1.200"/></svg>') +
  `<input class="form-check-input" type="checkbox" checked id="f${i}">` +
  (i ? '' : '<span class="position-relative ms-2"><svg width="20" height="20" viewBox="0 0 20 20"><path d="M1 3h18v16H1zM1 7h18M5 0v5M15 0v5" class="k"/><path d="M4 10h12M4 13h12M4 16h8" class="k" stroke-dasharray="1.500 2"/></svg><svg class="badge-ok" style="left:9px;top:9px" width="16" height="16"><use href="#ok"/></svg></span>') +
  `<label for="f${i}" style="padding-left:${i ? 32 : 4}px">${f}</label></div>`).join('');
</script>
</body>
</html>
